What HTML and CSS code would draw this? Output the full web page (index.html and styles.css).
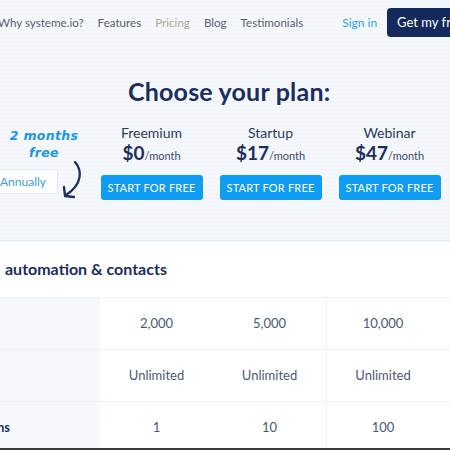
FILE: index.html
```html
<!DOCTYPE html>
<html>
<head>
<meta charset="utf-8">
<link rel="stylesheet" href="styles.css">
</head>
<body>
<div class="page">
  <section class="hero">
    <nav class="nav">
      <a class="nav-link">Why systeme.io?</a>
      <a class="nav-link">Features</a>
      <a class="nav-link active">Pricing</a>
      <a class="nav-link">Blog</a>
      <a class="nav-link">Testimonials</a>
      <a class="sign-in">Sign in</a>
      <a class="cta">Get my free account</a>
    </nav>
    <h1 class="title">Choose your plan:</h1>
    <div class="plans">
      <div class="billing">
        <div class="promo">2 months<br>free</div>
        <svg class="arrow" width="30" height="42" viewBox="0 0 30 42">
          <path d="M15 2 C22 10 23 24 6 35" fill="none" stroke="#1c2d5e" stroke-width="2.3" stroke-linecap="round"/>
          <path d="M4 27 L5 36 L14 37" fill="none" stroke="#1c2d5e" stroke-width="2.3" stroke-linecap="round" stroke-linejoin="round"/>
        </svg>
        <div class="toggle">Annually</div>
      </div>
      <div class="plan">
        <div class="plan-name">Freemium</div>
        <div class="plan-price"><b>$0</b><span>/month</span></div>
        <div class="btn">START FOR FREE</div>
      </div>
      <div class="plan">
        <div class="plan-name">Startup</div>
        <div class="plan-price"><b>$17</b><span>/month</span></div>
        <div class="btn">START FOR FREE</div>
      </div>
      <div class="plan">
        <div class="plan-name">Webinar</div>
        <div class="plan-price"><b>$47</b><span>/month</span></div>
        <div class="btn">START FOR FREE</div>
      </div>
    </div>
  </section>
  <section class="table">
    <h2 class="section-title"><span class="lead"><span>Email marketing</span></span>automation &amp; contacts</h2>
    <div class="row">
      <div class="label"><span class="lead"><span>Contacts</span></span></div>
      <div class="cell">2,000</div>
      <div class="cell">5,000</div>
      <div class="cell">10,000</div>
    </div>
    <div class="row">
      <div class="label"><span class="lead"><span>Emails</span></span></div>
      <div class="cell">Unlimited</div>
      <div class="cell">Unlimited</div>
      <div class="cell">Unlimited</div>
    </div>
    <div class="row">
      <div class="label shown"><span class="lead"><span>Automations</span></span></div>
      <div class="cell">1</div>
      <div class="cell">10</div>
      <div class="cell">100</div>
    </div>
  </section>
</div>
</body>
</html>
```
FILE: styles.css
```css
* { box-sizing: border-box; }
html, body { margin: 0; padding: 0; }
body {
  width: 450px;
  height: 450px;
  overflow: hidden;
  font-family: "Lato", "Noto Sans", sans-serif;
  color: #2b3a5e;
  background: #fff;
}
.page {
  height: 450px;
  border-bottom: 2px solid #3a3a3a;
  overflow: hidden;
}
.hero {
  height: 241px;
  background-color: #f4f8fc;
  background-image: radial-gradient(#ebf1f8 0.6px, transparent 0.8px);
  background-size: 4px 4px;
  border-bottom: 1px solid #d3ebf9;
}
.nav {
  display: flex;
  align-items: center;
  height: 45px;
  margin-left: -2px;
  white-space: nowrap;
}
.nav-link {
  font-size: 11.6px;
  color: #59606e;
  margin-right: 14px;
}
.nav-link.active { color: #b3a48f; }
.sign-in {
  font-size: 12px;
  color: #2aa2ee;
  margin-left: 25px;
  margin-right: 10px;
}
.cta {
  background: #142a5c;
  color: #fff;
  font-size: 13px;
  padding: 7px 10px;
  border-radius: 4px;
  height: 29px;
  line-height: 15px;
}
.title {
  margin: 32px 0 0 128px;
  font-size: 25px;
  font-weight: 700;
  color: #1c2d5e;
  line-height: 28px;
  letter-spacing: 0.2px;
}
.plans {
  display: flex;
  margin-top: 19px;
}
.billing {
  position: relative;
  width: 92px;
  height: 82px;
}
.promo {
  position: absolute;
  left: 4px;
  top: 3px;
  width: 80px;
  text-align: center;
  font-family: "DejaVu Sans", sans-serif;
  font-style: italic;
  font-weight: 700;
  font-size: 12.5px;
  line-height: 17px;
  color: #1a96f0;
  letter-spacing: 0.3px;
}
.arrow {
  position: absolute;
  left: 60px;
  top: 36px;
}
.toggle {
  position: absolute;
  left: -20px;
  top: 45px;
  width: 78px;
  height: 25px;
  background: #fff;
  border: 1px solid #e3ebf3;
  border-radius: 3px;
  font-size: 12px;
  line-height: 23px;
  color: #3b9ce6;
  padding-left: 19px;
}
.plan {
  width: 119px;
  display: flex;
  flex-direction: column;
  align-items: center;
}
.plan-name {
  font-size: 14px;
  line-height: 17px;
  color: #2b3a5e;
}
.plan-price {
  margin-top: 1px;
  line-height: 22px;
  color: #1c2d5e;
}
.plan-price b { font-size: 19px; font-weight: 700; }
.plan-price span { font-size: 11px; color: #3c4a6c; }
.btn {
  margin-top: 8px;
  width: 102px;
  height: 25px;
  border-radius: 3px;
  background: #0f9cf3;
  color: #fff;
  font-size: 11px;
  line-height: 25px;
  text-align: center;
  letter-spacing: 0.2px;
}
.table { background: #fff; }
.lead {
  display: inline-block;
  width: 0;
  direction: rtl;
  white-space: nowrap;
}
.lead > span {
  direction: ltr;
  unicode-bidi: isolate;
  padding-right: 12px;
}
.section-title {
  margin: 0;
  height: 56px;
  padding: 18px 0 0 5px;
  font-size: 16px;
  line-height: 20px;
  font-weight: 700;
  color: #1c2d5e;
  white-space: nowrap;
  overflow: hidden;
}
.row {
  display: grid;
  grid-template-columns: 100px 113px 113px 113px 11px;
  height: 52px;
  border-top: 1px solid #eef2f7;
}
.label {
  background: #f5f9fe;
  font-size: 13px;
  font-weight: 700;
  line-height: 51px;
  white-space: nowrap;
  overflow: hidden;
  padding-left: 10px;
  color: transparent;
}
.label .lead > span { padding-right: 0; }
.label.shown { color: #1c2d5e; }
.cell {
  font-size: 13px;
  color: #4a5878;
  text-align: center;
  line-height: 51px;
}
.cell:last-child { border-left: 1px solid #f0f3f7; }
```
